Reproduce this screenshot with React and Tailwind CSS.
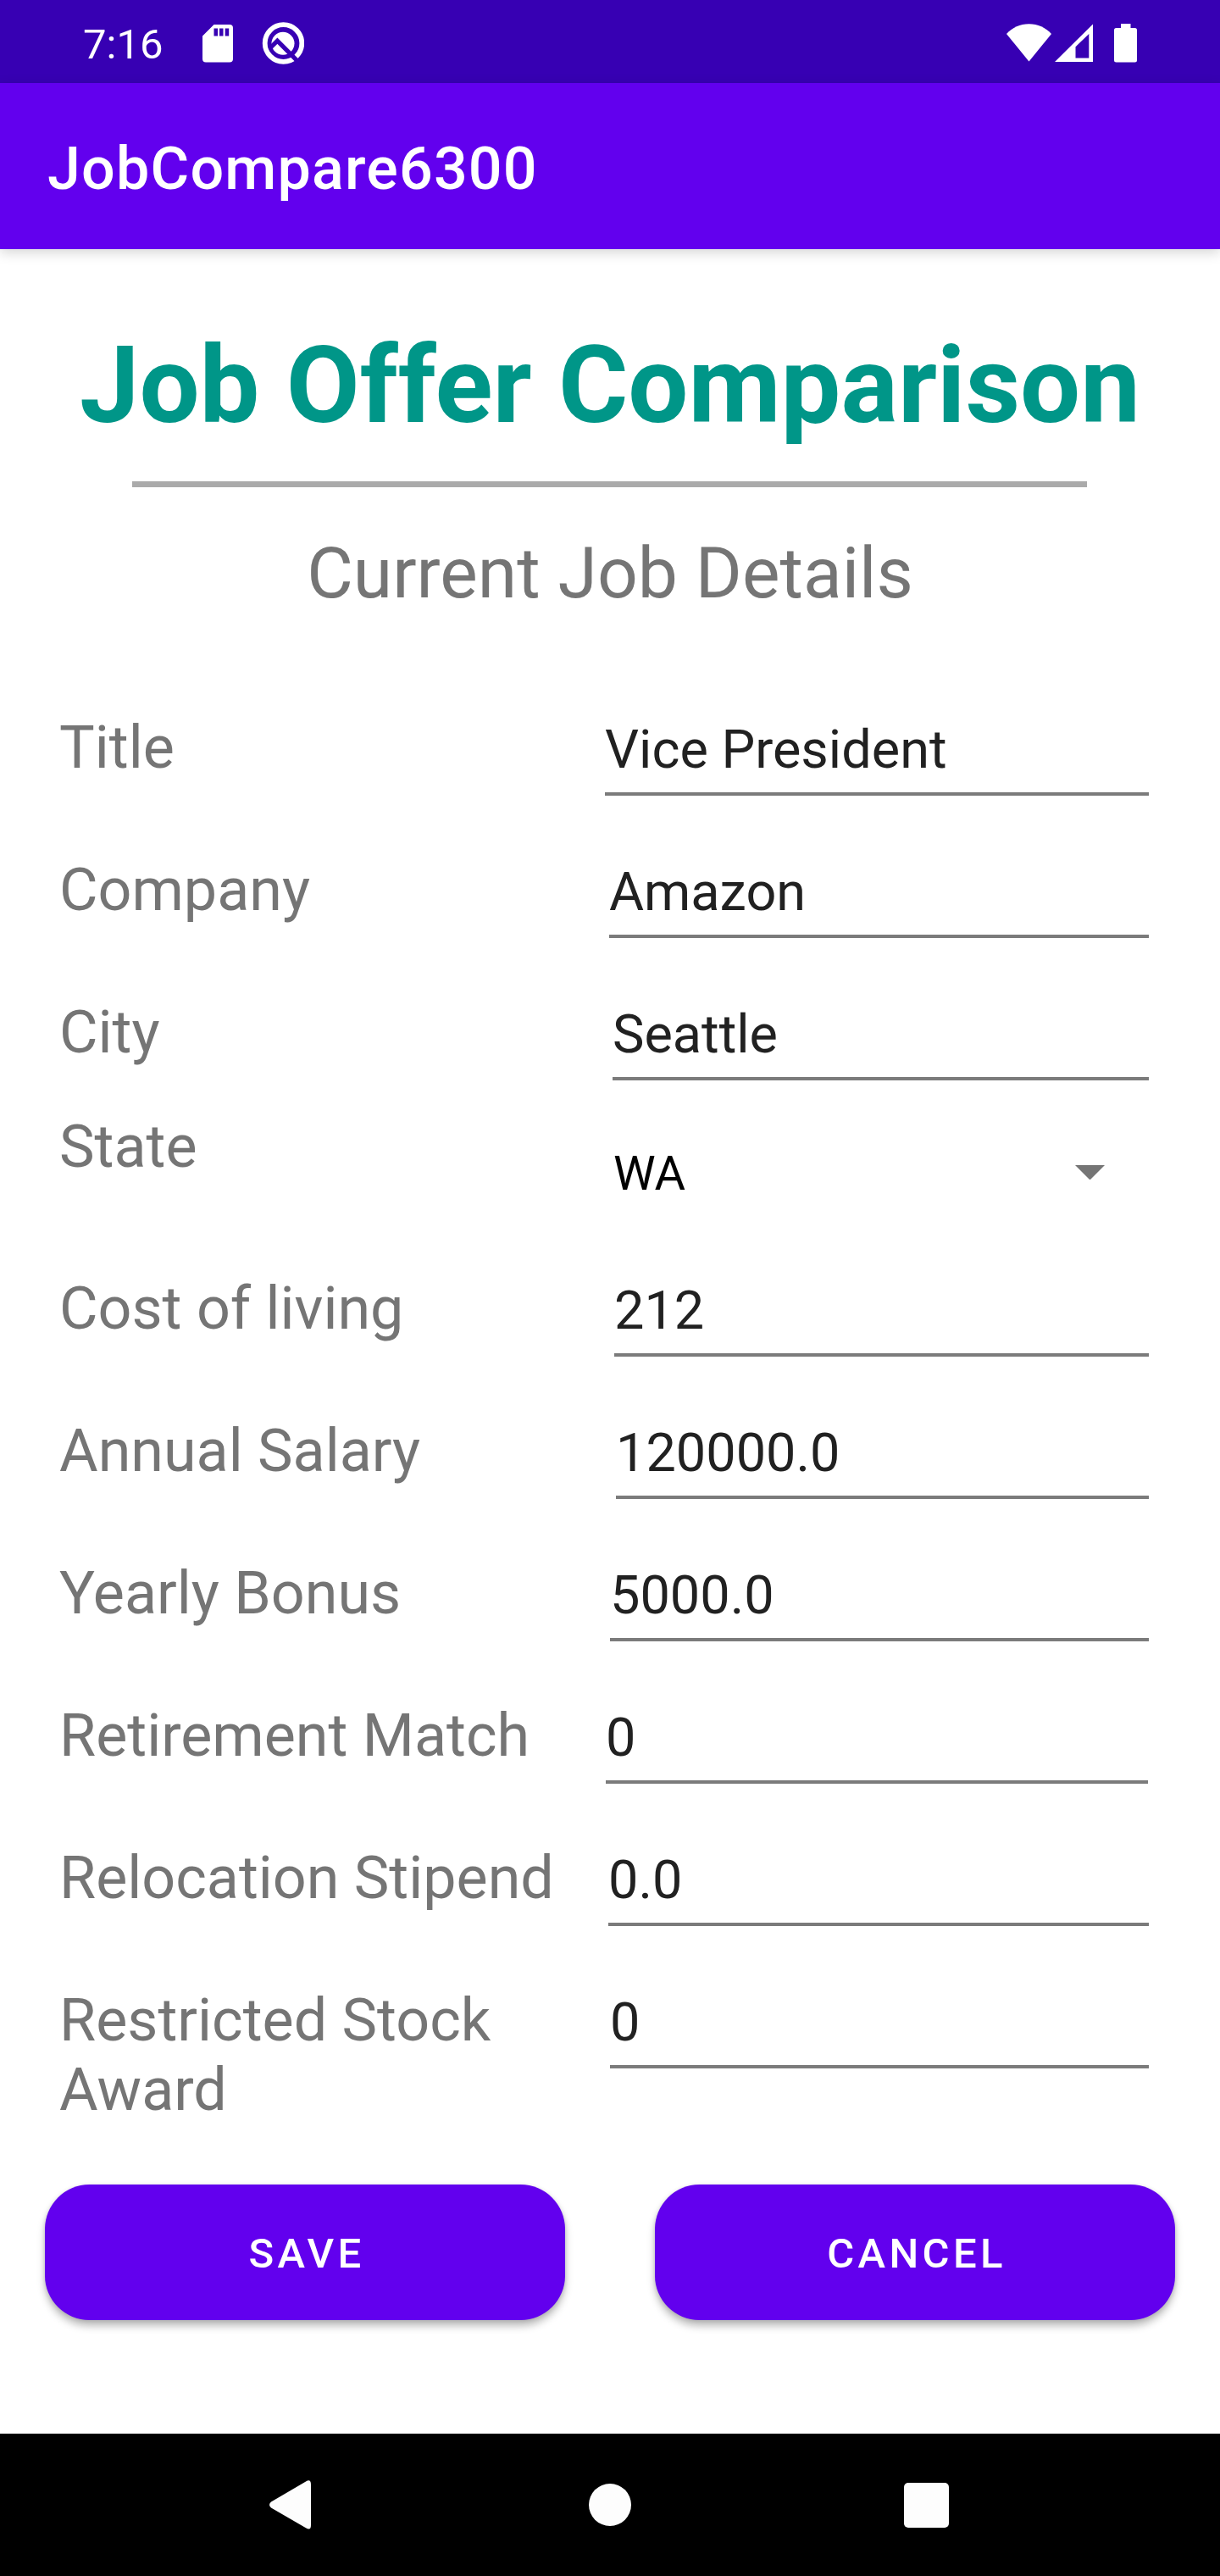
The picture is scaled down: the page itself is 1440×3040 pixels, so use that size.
const FIELDS = [
  { label: "Title", value: "Vice President", row: "h-[168px]", col: "w-[644px]", line: "w-[642px]" },
  { label: "Company", value: "Amazon", row: "h-[168px]", col: "w-[649px]", line: "w-[637px]" },
  { label: "City", value: "Seattle", row: "h-[135px]", col: "w-[653px]", line: "w-[633px]" },
  { label: "State", value: "WA", select: true, row: "h-[191px]", col: "w-[654px]", line: "w-[632px]" },
  { label: "Cost of living", value: "212", row: "h-[168px]", col: "w-[655px]", line: "w-[631px]" },
  { label: "Annual Salary", value: "120000.0", row: "h-[168px]", col: "w-[657px]", line: "w-[629px]" },
  { label: "Yearly Bonus", value: "5000.0", row: "h-[168px]", col: "w-[650px]", line: "w-[636px]" },
  { label: "Retirement Match", value: "0", row: "h-[168px]", col: "w-[645px]", line: "w-[640px]" },
  { label: "Relocation Stipend", value: "0.0", row: "h-[168px]", col: "w-[648px]", line: "w-[638px]" },
  { label: "Restricted Stock Award", value: "0", row: "h-[235px]", col: "w-[650px]", line: "w-[636px]" },
];

function StatusBar() {
  return (
    <div className="flex h-[98px] items-start bg-[#3700b3] text-white">
      <span className="ml-[98px] mt-[24px] w-[141px] text-[49px] leading-[58px]">7:16</span>
      <svg className="mt-[29px] h-[45px] w-[36px]" viewBox="0 0 36 45" fill="currentColor">
        <path
          fillRule="evenodd"
          d="M13.5 0H32a4 4 0 0 1 4 4v36.500a4 4 0 0 1-4 4H4a4 4 0 0 1-4-4V13.500ZM13.500 4.500v9h4.500v-9ZM20 4.500v9h4.500v-9ZM26.700 4.500v9h4.500v-9Z"
        />
      </svg>
      <svg className="ml-[34px] mt-[26px] h-[50px] w-[50px]" viewBox="0 0 50 50" fill="none">
        <circle cx="25.500" cy="25" r="21.800" stroke="white" strokeWidth="5.800" />
        <circle cx="25" cy="25.300" r="13.500" fill="white" />
        <path d="M9 31.500L18.400 22.200L43 46.800" stroke="#3700b3" strokeWidth="5.200" />
      </svg>
      <div className="ml-auto mr-[98px] flex">
        <svg className="mt-[28px] h-[45px] w-[53px]" viewBox="0 0 53 45" fill="currentColor">
          <path d="M0 12C7 4.500 16 .3 26.500.3S46 4.500 53 12L26.500 44.500Z" />
        </svg>
        <svg className="ml-[4px] mt-[28px] h-[45px] w-[45px]" viewBox="0 0 45 45" fill="currentColor">
          <path fillRule="evenodd" d="M45 .5V45H0ZM40.300 12L24.500 27.300V40.500H40.300Z" />
        </svg>
        <svg className="ml-[25px] mt-[28px] h-[46px] w-[27px]" viewBox="0 0 27 46" fill="currentColor">
          <path d="M8 0H19.500V5H24.500A2.500 2.500 0 0 1 27 7.500V43A2.500 2.500 0 0 1 24.500 45.500H2.500A2.500 2.500 0 0 1 0 43V7.500A2.500 2.500 0 0 1 2.500 5H8Z" />
        </svg>
      </div>
    </div>
  );
}

function Field({ label, value, select, row, col, line }) {
  return (
    <div className={`flex ${row}`}>
      <div className={`shrink-0 ${col}`}>
        <div className="w-[600px] text-[70px] leading-[82px] text-[#757575]">{label}</div>
      </div>
      {select ? (
        <div className={`flex items-start ${line}`}>
          <span className="mt-[40px] text-[56px] leading-[66px] text-black">{value}</span>
          <svg className="ml-auto mr-[52px] mt-[63px] h-[17px] w-[35px]" viewBox="0 0 35 17" fill="#757575">
            <path d="M0 0H35L17.500 17.500Z" />
          </svg>
        </div>
      ) : (
        <div className={`h-[98px] border-b-4 border-[#7b7b7b] pt-[7px] text-[63px] leading-[74px] text-[#212121] ${line}`}>
          {value}
        </div>
      )}
    </div>
  );
}

function Button({ children }) {
  return (
    <button className="h-[160px] w-[614px] rounded-[52.5px] bg-[#6200ee] pl-[4px] pt-[3px] text-[49px] font-medium leading-[58px] tracking-[0.0892857em] text-white shadow-[0_7px_10px_rgba(0,0,0,0.26),0_1px_5px_rgba(0,0,0,0.12)]">
      {children}
    </button>
  );
}

function NavBar() {
  return (
    <div className="flex h-[168px] items-center bg-black text-[#fdfdfd]">
      <svg className="ml-[318px] h-[58px] w-[49px]" viewBox="0 0 49 58" fill="currentColor">
        <path d="M43 1.500Q49-2 49 5V53Q49 60 43 56.200L2 32.500Q-2 29 2 25.500Z" />
      </svg>
      <div className="ml-[328px] h-[50px] w-[50px] rounded-full bg-[#fdfdfd]" />
      <div className="ml-[322px] h-[53px] w-[53px] rounded-[5px] bg-[#fdfdfd]" />
    </div>
  );
}

export default function App() {
  return (
    <div className="flex h-[3040px] w-[1440px] flex-col overflow-hidden bg-white font-[Roboto,sans-serif] [font-variant-ligatures:none]">
      <StatusBar />
      <header className="z-10 h-[196px] bg-[#6200ee] pl-[56px] pt-[60px] text-[70px] font-medium leading-[82px] tracking-[0.017em] text-white shadow-[0_4px_14px_rgba(0,0,0,0.17)]">
        JobCompare6300
      </header>
      <main className="flex flex-1 flex-col pt-[87px]">
        <h1 className="whitespace-nowrap text-center text-[126px] font-bold leading-[148px] text-[#009688]">
          Job Offer Comparison
        </h1>
        <div className="ml-[156px] mt-[39px] h-[7px] w-[1127px] bg-[#aaaaaa]" />
        <h2 className="mt-[53px] text-center text-[84px] leading-[98px] text-[#757575]">
          Current Job Details
        </h2>
        <form className="mt-[115px] pl-[70px]">
          {FIELDS.map((field) => (
            <Field key={field.label} {...field} />
          ))}
        </form>
        <div className="flex justify-between px-[53px]">
          <Button>SAVE</Button>
          <Button>CANCEL</Button>
        </div>
      </main>
      <NavBar />
    </div>
  );
}
